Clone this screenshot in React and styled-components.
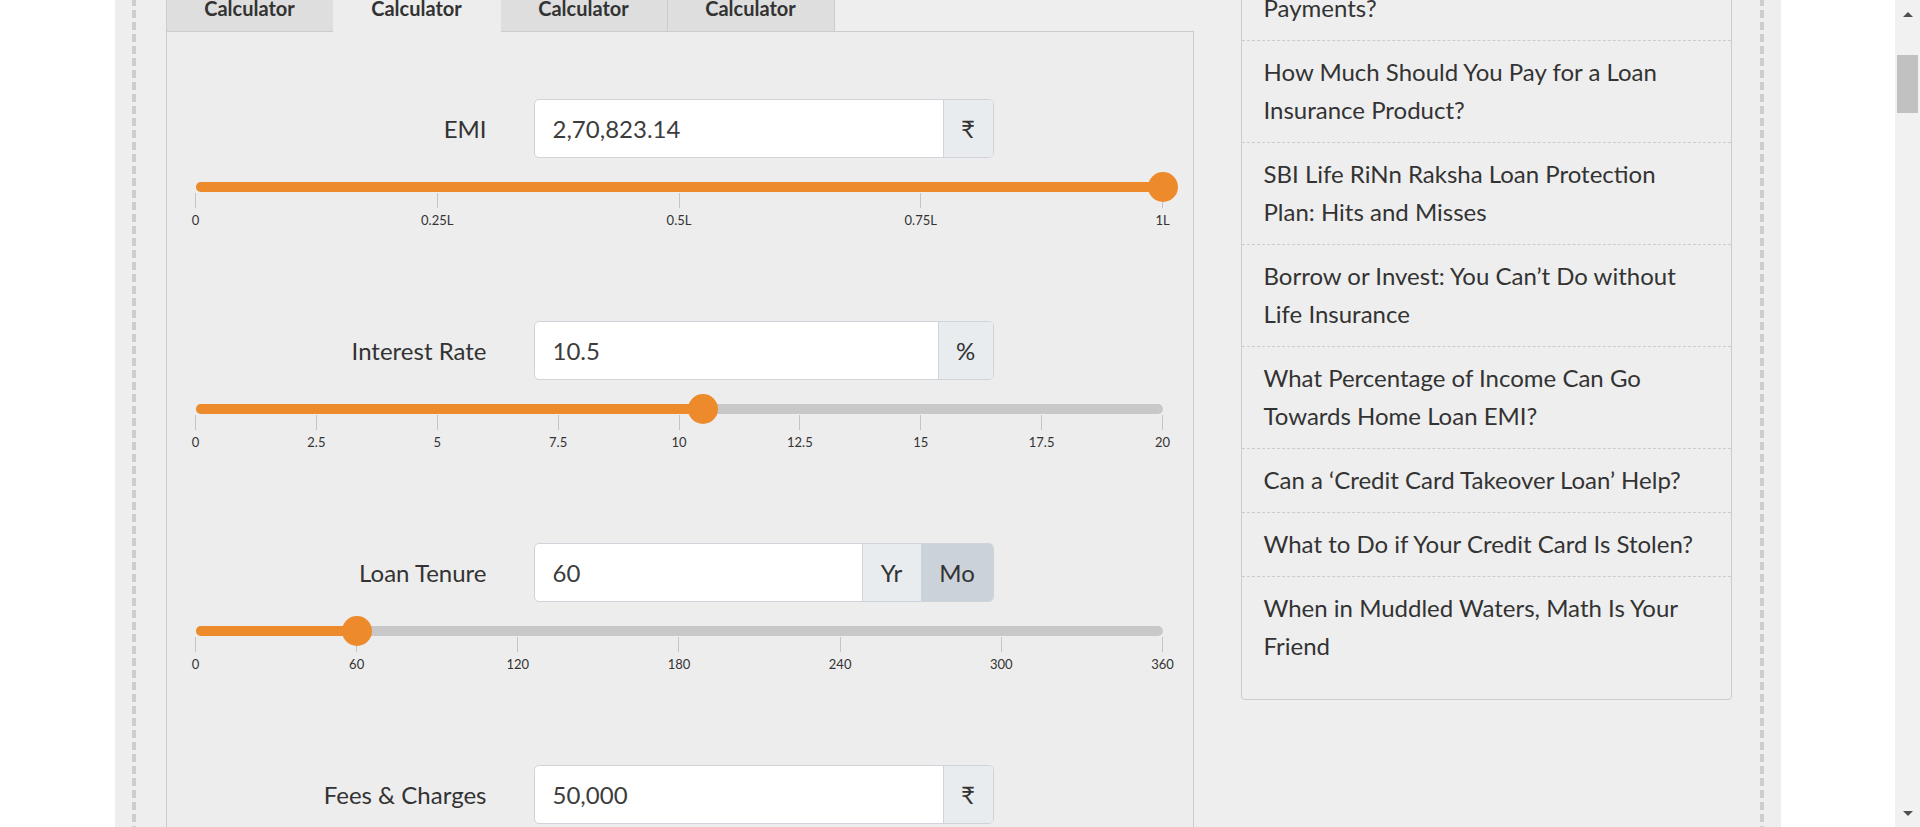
import styled, { createGlobalStyle } from "styled-components";

const GlobalStyle = createGlobalStyle`
  html, body {
    margin: 0;
    padding: 0;
    height: 100%;
    overflow: hidden;
    background: #fff;
  }
  body {
    font-family: Lato, "Open Sans", "DejaVu Sans", sans-serif;
    color: #333;
  }
`;

const Screen = styled.div`
  display: flex;
  width: 1920px;
  height: 827px;
  overflow: hidden;
`;

const Viewport = styled.div`
  flex: 1;
  min-width: 0;
  overflow: hidden;
`;

// fake browser scrollbar on the right
const Scrollbar = styled.div`
  width: 25px;
  height: 827px;
  background: #f1f1f1;
  display: flex;
  flex-direction: column;
  align-items: center;
`;

const ScrollArrow = styled.div`
  height: 28px;
  width: 100%;
  display: flex;
  align-items: center;
  justify-content: center;
  &::before {
    content: "";
    border-left: 5px solid transparent;
    border-right: 5px solid transparent;
    ${(p) =>
      p.$down
        ? "border-top: 5px solid #505050;"
        : "border-bottom: 5px solid #505050;"}
  }
`;

const ScrollTrack = styled.div`
  flex: 1;
  width: 100%;
  display: flex;
  justify-content: center;
  padding-top: 27px;
`;

const ScrollThumb = styled.div`
  width: 21px;
  height: 58px;
  background: #c1c1c1;
`;

const Container = styled.div`
  width: 1666px;
  box-sizing: border-box;
  margin: -62px auto 0;
  padding: 0 17px;
  background: #eee;
  min-height: 1000px;
`;

const Dashed = styled.div`
  min-height: 1000px;
  padding: 0 34px;
  background:
    repeating-linear-gradient(to bottom, #cdcdcd 0 8px, transparent 8px 12px) left top / 4px 100% no-repeat,
    repeating-linear-gradient(to bottom, #cdcdcd 0 8px, transparent 8px 12px) right top / 4px 100% no-repeat;
`;

const Columns = styled.div`
  display: grid;
  grid-template-columns: 1028px 491px;
  gap: 47px;
  align-items: start;
`;

const CalcColumn = styled.div`
  padding-top: 49px;
`;

const TabBar = styled.div`
  display: flex;
  align-items: flex-start;
`;

const Tab = styled.div`
  position: relative;
  width: 168px;
  height: ${(p) => (p.$active ? "45px" : "44px")};
  margin-bottom: ${(p) => (p.$active ? "-1px" : "0")};
  margin-right: -1px;
  box-sizing: border-box;
  border: 1px solid #ccc;
  border-bottom: none;
  background: ${(p) => (p.$active ? "#ededed" : "#dedede")};
  border-color: ${(p) => (p.$active ? "transparent" : "#ccc")};
  font-size: 20px;
  font-weight: 700;
  color: #333;
  text-align: center;
  line-height: 41px;
  z-index: ${(p) => (p.$active ? 1 : 0)};
`;

const Panel = styled.div`
  background: #ededed;
  border: 1px solid #ccc;
  padding: 67px 30px 0 29px;
  min-height: 900px;
`;

const Block = styled.div`
  margin-bottom: 92px;
`;

const Row = styled.div`
  display: grid;
  grid-template-columns: 291px 460px;
  gap: 47px;
  align-items: center;
`;

const Label = styled.label`
  text-align: right;
  font-size: 24px;
  color: #333;
`;

const InputGroup = styled.div`
  display: flex;
  height: 59px;
  box-sizing: border-box;
  border: 1px solid #ced4da;
  border-radius: 5px;
  overflow: hidden;
  background: #fff;
`;

const Field = styled.input`
  flex: 1;
  min-width: 0;
  border: none;
  outline: none;
  background: transparent;
  padding: 0 18px;
  font-family: Lato, "Open Sans", sans-serif;
  font-size: 24px;
  color: #3c3c3c;
`;

const Addon = styled.div`
  width: ${(p) => p.$w}px;
  flex-shrink: 0;
  box-sizing: border-box;
  border-left: 1px solid #ced4da;
  background: ${(p) => (p.$active ? "#cbd2d9" : "#e9ecef")};
  display: flex;
  align-items: center;
  justify-content: center;
  font-size: 24px;
  color: #333;
  font-family: Lato, "DejaVu Sans", sans-serif;
`;

const SliderArea = styled.div`
  margin-top: 14px;
  height: 21px;
`;

const Track = styled.div`
  position: relative;
  top: 10px;
  height: 10px;
  border-radius: 5px;
  background: #c8c8c8;
`;

const Fill = styled.div`
  height: 100%;
  border-radius: 5px;
  background: #ed8b2c;
`;

const Thumb = styled.div`
  position: absolute;
  top: -10px;
  width: 30px;
  height: 30px;
  margin-left: -15px;
  border-radius: 50%;
  background: #ed8b2c;
`;

const Scale = styled.div`
  display: flex;
  justify-content: space-between;
`;

const Tick = styled.div`
  width: 0;
  display: flex;
  flex-direction: column;
  align-items: center;
`;

const TickLine = styled.div`
  width: 1px;
  height: 15px;
  background: #c4c4c4;
`;

const TickLabel = styled.span`
  margin-top: 3px;
  font-size: 13px;
  line-height: 18px;
  white-space: nowrap;
  color: #333;
`;

const SideBox = styled.div`
  background: #eee;
  border: 1px solid #ccc;
  border-radius: 4px;
  padding-bottom: 21px;
`;

const SideItem = styled.a`
  display: block;
  padding: 12px 30px 13px 22px;
  font-size: 24px;
  line-height: 38px;
  color: #333;
  text-decoration: none;
  border-bottom: 1px dashed #ccc;
  &:last-child {
    border-bottom: none;
  }
`;

const fields = [
  {
    label: "EMI",
    value: "2,70,823.14",
    addons: [{ text: "₹", w: 50 }],
    pct: 100,
    ticks: ["0", "0.25L", "0.5L", "0.75L", "1L"],
  },
  {
    label: "Interest Rate",
    value: "10.5",
    addons: [{ text: "%", w: 55 }],
    pct: 52.5,
    ticks: ["0", "2.5", "5", "7.5", "10", "12.5", "15", "17.5", "20"],
  },
  {
    label: "Loan Tenure",
    value: "60",
    addons: [
      { text: "Yr", w: 59 },
      { text: "Mo", w: 72, active: true },
    ],
    pct: (60 / 360) * 100,
    ticks: ["0", "60", "120", "180", "240", "300", "360"],
  },
  {
    label: "Fees & Charges",
    value: "50,000",
    addons: [{ text: "₹", w: 50 }],
    pct: 50,
    ticks: ["0", "25K", "50K", "75K", "100K"],
  },
];

const articles = [
  <>
    Should You Make Loan Pre-
    <br />
    Payments?
  </>,
  "How Much Should You Pay for a Loan Insurance Product?",
  "SBI Life RiNn Raksha Loan Protection Plan: Hits and Misses",
  "Borrow or Invest: You Can’t Do without Life Insurance",
  "What Percentage of Income Can Go Towards Home Loan EMI?",
  "Can a ‘Credit Card Takeover Loan’ Help?",
  "What to Do if Your Credit Card Is Stolen?",
  "When in Muddled Waters, Math Is Your Friend",
];

const SliderField = ({ field }) => (
  <Block>
    <Row>
      <Label>{field.label}</Label>
      <InputGroup>
        <Field defaultValue={field.value} readOnly />
        {field.addons.map((a) => (
          <Addon key={a.text} $w={a.w} $active={a.active}>
            {a.text}
          </Addon>
        ))}
      </InputGroup>
    </Row>
    <SliderArea>
      <Track>
        <Fill style={{ width: `${field.pct}%` }} />
        <Thumb style={{ left: `${field.pct}%` }} />
      </Track>
    </SliderArea>
    <Scale>
      {field.ticks.map((t) => (
        <Tick key={t}>
          <TickLine />
          <TickLabel>{t}</TickLabel>
        </Tick>
      ))}
    </Scale>
  </Block>
);

export default function App() {
  return (
    <Screen>
      <GlobalStyle />
      <Viewport>
        <Container>
          <Dashed>
            <Columns>
              <CalcColumn>
                <TabBar>
                  {[0, 1, 2, 3].map((i) => (
                    <Tab key={i} $active={i === 1}>
                      Calculator
                    </Tab>
                  ))}
                </TabBar>
                <Panel>
                  {fields.map((f) => (
                    <SliderField key={f.label} field={f} />
                  ))}
                </Panel>
              </CalcColumn>

              <SideBox>
                {articles.map((a, i) => (
                  <SideItem key={i} href="#">
                    {a}
                  </SideItem>
                ))}
              </SideBox>
            </Columns>
          </Dashed>
        </Container>
      </Viewport>
      <Scrollbar>
        <ScrollArrow />
        <ScrollTrack>
          <ScrollThumb />
        </ScrollTrack>
        <ScrollArrow $down />
      </Scrollbar>
    </Screen>
  );
}
